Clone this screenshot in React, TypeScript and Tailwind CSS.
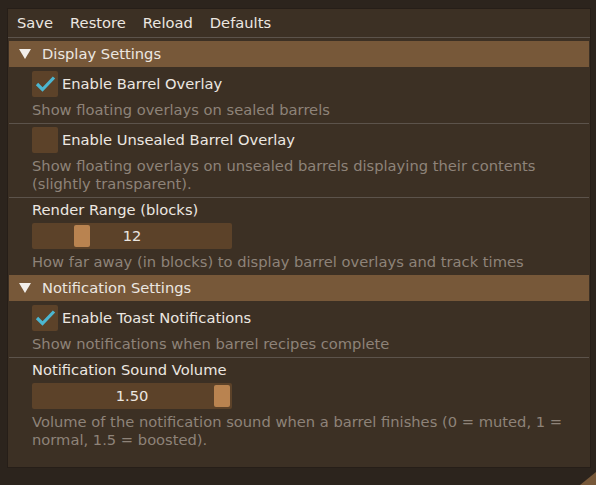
import React from "react";

const font = { fontFamily: '"DejaVu Sans", "Liberation Sans", sans-serif' };

function Check({ on }: { on: boolean }) {
  return (
    <div className="w-[26px] h-[26px] bg-[#5c4229] rounded-[2px] shrink-0 flex items-center justify-center">
      {on && (
        <svg width="26" height="26" viewBox="0 0 26 26">
          <path d="M5 13 L10.5 18.5 L22 6.5" fill="none" stroke="#4cb6d0" strokeWidth="3.2" strokeLinecap="butt" strokeLinejoin="miter" />
        </svg>
      )}
    </div>
  );
}

function Header({ title }: { title: string }) {
  return (
    <div className="mx-[1px] h-[26px] bg-[#775839] flex items-center text-[#ece7e1]">
      <svg width="12" height="10" viewBox="0 0 12 10" className="ml-[10px] mr-[11px]">
        <path d="M0 0 L12 0 L6 10 Z" fill="#f2eeea" />
      </svg>
      <span>{title}</span>
    </div>
  );
}

function Sep() {
  return <div className="mx-[1px] h-px bg-[#5c534b]" />;
}

function Desc({ lines }: { lines: string[] }) {
  return (
    <div className="pl-[24px] text-[#8e8379] leading-[18px]">
      {lines.map((l, i) => (
        <div key={i} className="whitespace-nowrap">{l}</div>
      ))}
    </div>
  );
}

function CheckRow({ on, label }: { on: boolean; label: string }) {
  return (
    <div className="pl-[24px] flex items-center gap-[4px] h-[26px] text-[#ece7e1]">
      <Check on={on} />
      <span className="whitespace-nowrap">{label}</span>
    </div>
  );
}

function Slider({ value, grabLeft }: { value: string; grabLeft: number }) {
  return (
    <div className="pl-[24px]">
      <div className="relative w-[200px] h-[26px] bg-[#5c4229] rounded-[2px] flex items-center justify-center text-[#ece7e1]">
        <div
          className="absolute top-[2px] w-[16px] h-[22px] bg-[#b98350] rounded-[2px]"
          style={{ left: grabLeft }}
        />
        <span className="relative">{value}</span>
      </div>
    </div>
  );
}

export default function App() {
  return (
    <div className="relative w-[596px] h-[485px] bg-[#2c241d] overflow-hidden text-[14.7px]" style={font}>
      <div className="absolute left-[7px] top-[8px] w-[584px] h-[460px] border border-[#261e18] bg-[#3c3024]">
        <div className="h-[28px] flex items-center gap-[17px] pl-[9px] pt-[1px] text-[#ece7e1]">
          <span>Save</span>
          <span>Restore</span>
          <span>Reload</span>
          <span>Defaults</span>
        </div>
        <div className="h-px bg-[#5c534b]" />
        <div className="flex flex-col gap-[4px] pt-[3px]">
          <Header title="Display Settings" />
          <CheckRow on label="Enable Barrel Overlay" />
          <Desc lines={["Show floating overlays on sealed barrels"]} />
          <Sep />
          <div className="-mt-[1px] flex flex-col gap-[4px]">
            <CheckRow on={false} label="Enable Unsealed Barrel Overlay" />
            <Desc
              lines={[
                "Show floating overlays on unsealed barrels displaying their contents",
                "(slightly transparent).",
              ]}
            />
          </div>
          <Sep />
          <div className="-mt-[1px] flex flex-col gap-[4px]">
            <div className="pl-[24px] h-[18px] leading-[18px] text-[#ece7e1]">Render Range (blocks)</div>
            <Slider value="12" grabLeft={42} />
            <Desc lines={["How far away (in blocks) to display barrel overlays and track times"]} />
          </div>
          <Header title="Notification Settings" />
          <CheckRow on label="Enable Toast Notifications" />
          <Desc lines={["Show notifications when barrel recipes complete"]} />
          <Sep />
          <div className="-mt-[1px] flex flex-col gap-[4px]">
            <div className="pl-[24px] h-[18px] leading-[18px] text-[#ece7e1]">Notification Sound Volume</div>
            <Slider value="1.50" grabLeft={182} />
            <Desc
              lines={[
                "Volume of the notification sound when a barrel finishes (0 = muted, 1 =",
                "normal, 1.5 = boosted).",
              ]}
            />
          </div>
        </div>
      </div>
      <svg className="absolute right-0 bottom-0" width="16" height="13" viewBox="0 0 16 13">
        <path d="M16 0 L16 13 L0 13 Z" fill="#775839" />
      </svg>
    </div>
  );
}
